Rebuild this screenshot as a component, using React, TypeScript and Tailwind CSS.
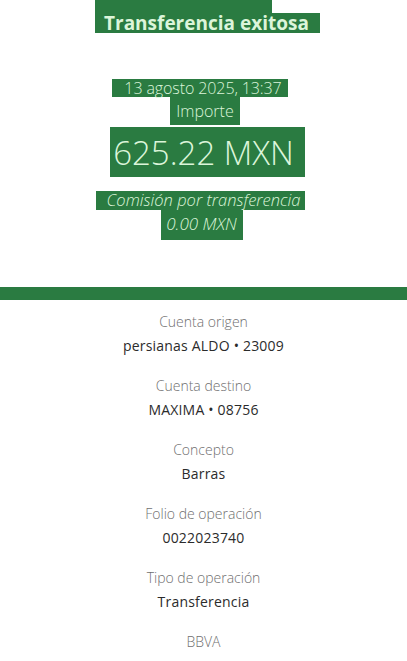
const green = 'bg-[#2a7b41]';

const details = [
  { label: 'Cuenta origen', value: 'persianas ALDO • 23009' },
  { label: 'Cuenta destino', value: 'MAXIMA • 08756' },
  { label: 'Concepto', value: 'Barras' },
  { label: 'Folio de operación', value: '0022023740' },
  { label: 'Tipo de operación', value: 'Transferencia' },
];

export default function App() {
  return (
    <div className="min-h-[661px] w-[407px] overflow-hidden bg-white font-['Open_Sans',sans-serif]">
      {/* receipt header */}
      <div className="flex flex-col items-center text-[#dcf5da]">
        <div className="ml-[8px] flex w-[225px] flex-col">
          <div className={`h-[13px] w-[177px] ${green}`} />
          <div className={`flex h-[20px] items-center pl-[9px] text-[19px] font-bold leading-none ${green}`}>
            Transferencia exitosa
          </div>
        </div>

        <div className={`mt-[46px] mr-[7px] flex h-[18px] w-[176px] items-center justify-center pl-[6px] text-[16px] font-light leading-none tracking-[-0.1px] ${green}`}>
          13 agosto 2025, 13:37
        </div>
        <div className={`ml-[3px] flex h-[28px] w-[70px] items-center justify-center text-[16px] font-light leading-none ${green}`}>
          Importe
        </div>
        <div className={`mt-[2px] ml-[8px] flex h-[50px] w-[195px] items-center justify-center pr-[8px] text-[33px] font-light leading-none ${green}`}>
          625.22 MXN
        </div>

        <div className={`mt-[14px] mr-[6px] flex h-[19px] w-[209px] items-center justify-center pl-[6px] text-[16.5px] font-light italic leading-none ${green}`}>
          Comisión por transferencia
        </div>
        <div className={`mr-[4px] flex h-[30px] w-[82px] items-start justify-center pt-[5px] text-[17px] font-light italic leading-none ${green}`}>
          0.00 MXN
        </div>
      </div>

      <div className={`mt-[47px] h-[13px] w-full ${green}`} />

      {/* details */}
      <div className="flex flex-col items-center gap-[16px] pt-[10px] text-[14px] leading-[24px]">
        {details.map((d) => (
          <div key={d.label} className="flex flex-col items-center">
            <span className="font-light text-[#6f6f6f]">{d.label}</span>
            <span className="text-[#2b2b2b] tracking-[0.2px]">{d.value}</span>
          </div>
        ))}
        <span className="font-light text-[#6f6f6f]">BBVA</span>
      </div>
    </div>
  );
}
